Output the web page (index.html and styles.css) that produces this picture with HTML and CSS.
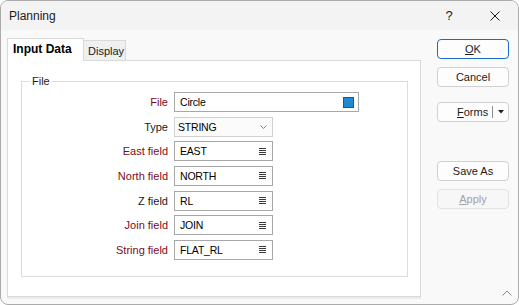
FILE: index.html
```html
<!DOCTYPE html>
<html lang="en">
<head>
    <meta charset="UTF-8">
    <title>Planning</title>
    <link rel="stylesheet" href="styles.css">
</head>
<body>
    <div class="window">
        <div class="titlebar">
            <span class="title">Planning</span>
            <span class="caption-btn help">?</span>
            <span class="caption-btn">
                <svg width="10" height="10" viewBox="0 0 10 10"><path d="M0.5 0.5 L9.5 9.5 M9.5 0.5 L0.5 9.5" stroke="#1b1b1b" stroke-width="1"/></svg>
            </span>
        </div>

        <div class="body">
            <div class="main">
                <div class="tabs">
                    <div class="tab active">Input Data</div>
                    <div class="tab">Display</div>
                </div>
                <div class="panel">
                    <div class="group">
                        <div class="legend">File</div>
                        <div class="fields">
                            <label class="req">File</label>
                            <div class="input wide">
                                <span>Circle</span>
                                <span class="swatch"></span>
                            </div>

                            <label>Type</label>
                            <div class="input combo">
                                <span>STRING</span>
                                <svg width="7" height="4" viewBox="0 0 7 4"><path d="M0.5 0.5 L3.5 3.5 L6.5 0.5" fill="none" stroke="#777" stroke-width="0.9"/></svg>
                            </div>

                            <label class="req">East field</label>
                            <div class="input"><span>EAST</span><span class="lines"></span></div>

                            <label class="req">North field</label>
                            <div class="input"><span>NORTH</span><span class="lines"></span></div>

                            <label>Z field</label>
                            <div class="input"><span>RL</span><span class="lines"></span></div>

                            <label class="req">Join field</label>
                            <div class="input"><span>JOIN</span><span class="lines"></span></div>

                            <label class="req">String field</label>
                            <div class="input"><span>FLAT_RL</span><span class="lines"></span></div>
                        </div>
                    </div>
                </div>
            </div>

            <div class="side">
                <div class="btn default"><span><u>O</u>K</span></div>
                <div class="btn cancel">Cancel</div>
                <div class="btn split">
                    <span class="split-label"><u>F</u>orms</span>
                    <span class="divider"></span>
                    <svg width="6" height="4" viewBox="0 0 6 4"><path d="M0 0 H6 L3 3.5 Z" fill="#222"/></svg>
                </div>
                <div class="btn save">Save As</div>
                <div class="btn disabled"><span><u>A</u>pply</span></div>
            </div>
        </div>

        <svg class="grip" width="10" height="6" viewBox="0 0 10 6"><path d="M0.5 5.5 L5 1 L9.5 5.5" fill="none" stroke="#8a8a8a" stroke-width="1"/></svg>
    </div>
</body>
</html>
```

FILE: styles.css
```css
* {
    box-sizing: border-box;
}
body {
    margin: 0;
    background: #ffffff;
    font-family: "Liberation Sans", Arial, sans-serif;
    font-size: 11px;
    color: #000;
}
.window {
    position: relative;
    width: 519px;
    height: 305px;
    border: 1px solid #ababab;
    border-radius: 8px;
    overflow: hidden;
    background: #f9f9f9;
    display: flex;
    flex-direction: column;
}
.titlebar {
    height: 29px;
    display: flex;
    align-items: center;
    background: #f3f3f3;
    padding-left: 8px;
}
.title {
    flex: 1;
    font-size: 12px;
    color: #1b1b1b;
}
.caption-btn {
    width: 46px;
    height: 29px;
    display: flex;
    align-items: center;
    justify-content: center;
}
.help {
    font-size: 13px;
    color: #1b1b1b;
}
.body {
    display: flex;
    padding: 8px 0 0 6px;
}
.main {
    width: 414px;
}
.tabs {
    display: flex;
    align-items: flex-end;
    height: 22px;
}
.tab {
    width: 43px;
    height: 20px;
    margin-left: -1px;
    padding-left: 4px;
    border: 1px solid #d9d9d9;
    border-bottom: none;
    background: #f0f0f0;
    line-height: 20px;
    color: #1b1b1b;
}
.tab.active {
    position: relative;
    z-index: 1;
    width: 77px;
    height: 23px;
    margin-left: 0;
    margin-bottom: -1px;
    padding-left: 5px;
    background: #fff;
    font-size: 12px;
    font-weight: bold;
    line-height: 21px;
    color: #000;
}
.panel {
    height: 237px;
    background: #fff;
    border: 1px solid #d9d9d9;
    padding: 20px 0 0 13px;
    box-shadow: 0 2px 0 #ececec;
}
.group {
    width: 387px;
    height: 196px;
    border: 1px solid #dcdcdc;
}
.legend {
    width: max-content;
    margin: -8px 0 0 8px;
    padding: 0 2px;
    background: #fff;
    line-height: 14px;
    color: #1b1b1b;
}
.fields {
    display: grid;
    grid-template-columns: 146px auto;
    justify-content: start;
    align-items: center;
    column-gap: 6px;
    row-gap: 4.67px;
    margin-top: 4px;
}
.fields label {
    text-align: right;
    color: #1b1b1b;
}
.fields label.req {
    color: #7a0b1c;
}
.input {
    width: 99px;
    height: 20px;
    display: flex;
    align-items: center;
    justify-content: space-between;
    padding: 0 6px 0 5px;
    border: 1px solid #a7a7a7;
    background: #fff;
    font-size: 10.5px;
    letter-spacing: -0.2px;
}
.input.wide {
    width: 185px;
    padding-right: 4px;
}
.input.combo {
    padding-left: 3px;
    padding-right: 5px;
    border-color: #d0d0d0;
    background: #fbfbfb;
}
.swatch {
    width: 11px;
    height: 11px;
    background: #1f8ad2;
    border: 1px solid #3b506b;
}
.lines {
    width: 7px;
    height: 7px;
    background: repeating-linear-gradient(to bottom, #3a3a3a 0 1px, transparent 1px 2px);
}
.side {
    display: flex;
    flex-direction: column;
    width: 72px;
    margin-left: 16px;
    padding-top: 1px;
}
.btn {
    height: 20px;
    display: flex;
    align-items: center;
    justify-content: center;
    border: 1px solid #d0d0d0;
    border-radius: 4px;
    background: #fdfdfd;
    color: #1b1b1b;
}
.btn.default {
    border-color: #1a6cc4;
}
.btn.cancel {
    margin-top: 8px;
}
.btn.split {
    margin-top: 15px;
    justify-content: flex-start;
    padding-left: 19px;
}
.split-label {
    width: 35px;
}
.divider {
    width: 1px;
    height: 12px;
    background: #8f8f8f;
    margin-right: 5px;
}
.btn.save {
    margin-top: 39px;
}
.btn.disabled {
    margin-top: 8px;
    border-color: #e3e3e3;
    background: #f7f7f7;
    color: #a2a2a2;
}
.grip {
    position: absolute;
    right: 6px;
    bottom: 8px;
}
```
